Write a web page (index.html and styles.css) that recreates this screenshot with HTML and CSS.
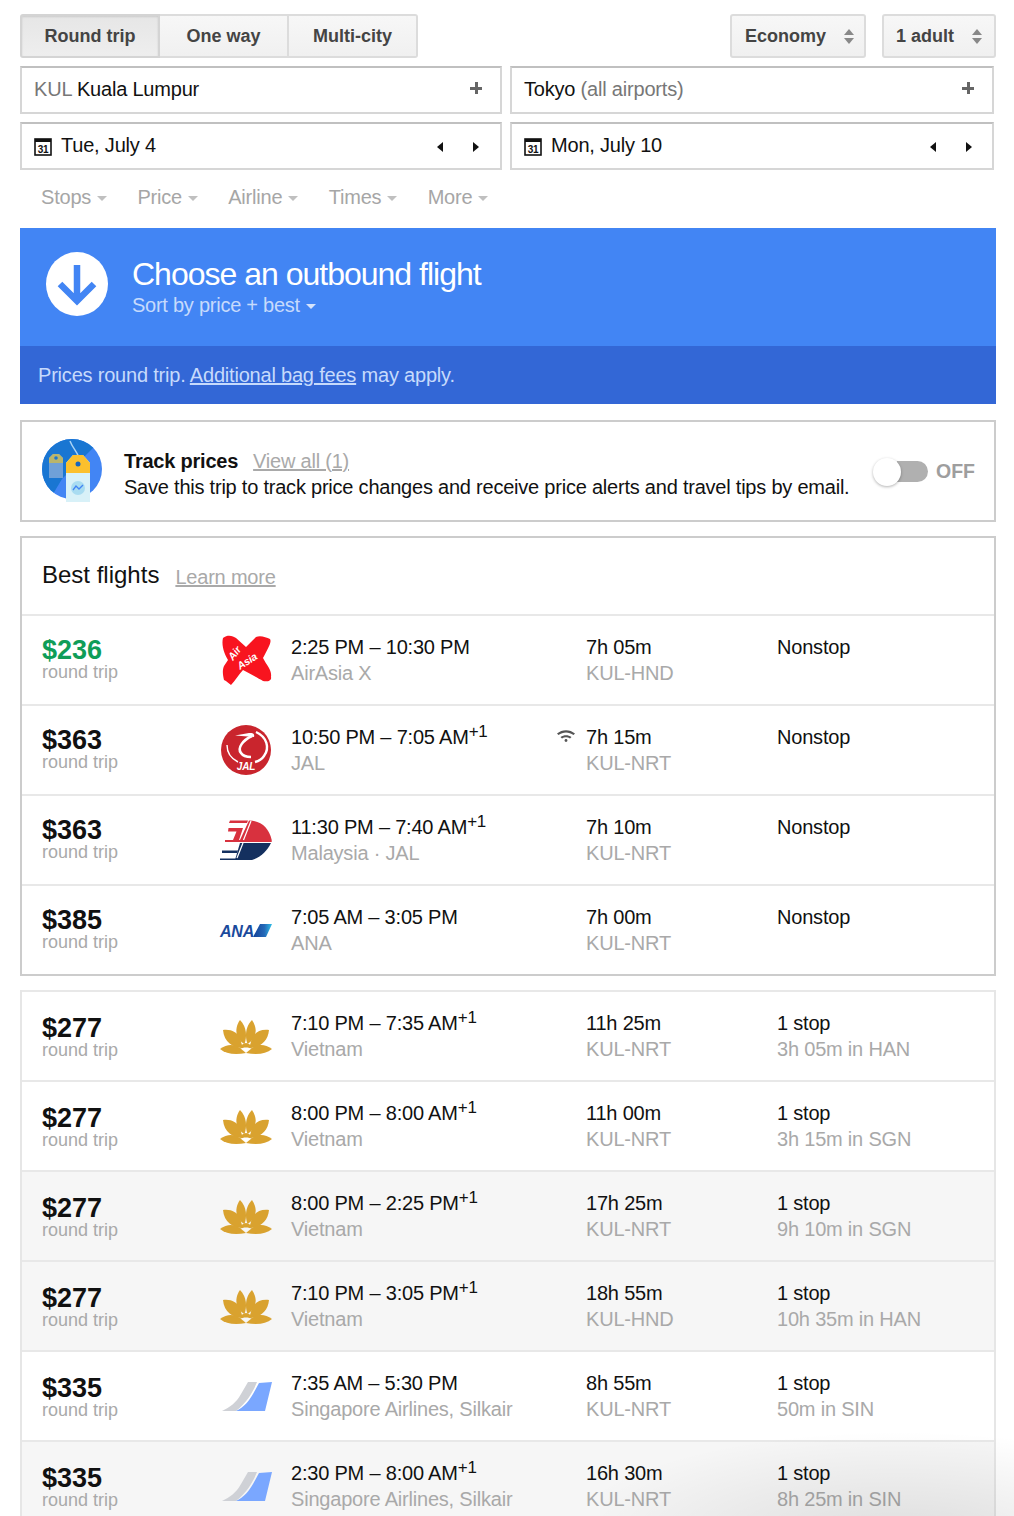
FILE: index.html
```html
<!DOCTYPE html>
<html lang="en">
<head>
<meta charset="utf-8">
<title>Flights</title>
<link rel="stylesheet" href="styles.css">
</head>
<body>
<svg class="defs" width="0" height="0" aria-hidden="true">
  <defs>
    <symbol id="cal" viewBox="0 0 18 18">
      <rect x="1" y="1" width="16" height="16" fill="#fff" stroke="#111" stroke-width="1.6"/>
      <rect x="1" y="1" width="16" height="3" fill="#111"/>
      <text x="9" y="14.500" text-anchor="middle" font-family="Liberation Sans" font-size="10" font-weight="700" fill="#111">31</text>
    </symbol>
    <symbol id="lotus" viewBox="0 0 52 52">
      <g fill="#d9a22f">
        <path d="M20 10C27 17 27 27 24.500 34 17 30 13 20 20 10Z"/>
        <path d="M32 10C25 17 25 27 27.500 34 35 30 39 20 32 10Z"/>
        <path d="M3 20C11 19 17 22 20 28 21 32 22 35 23 38 13 38 4 32 3 20Z"/>
        <path d="M49 20C41 19 35 22 32 28 31 32 30 35 29 38 39 38 48 32 49 20Z"/>
        <path d="M0 39C7 34 14 34 20 38L26 43C15 45 6 44 0 39Z"/>
        <path d="M52 39C45 34 38 34 32 38L26 43C37 45 46 44 52 39Z"/>
        <path d="M20 39C21 35 23 33 26 33 29 33 31 35 32 39 29 37 23 37 20 39Z"/>
      </g>
    </symbol>
    <symbol id="tail" viewBox="0 0 52 52">
      <path d="M2 41C10 37 16 33 21 24L28 12H37C33 22 27 32 16 41Z" fill="#cfd1d6"/>
      <path d="M16 41C24 37 29 31 33 24L39 13 52 12 45 41Z" fill="#7aa7ff"/>
    </symbol>
  </defs>
</svg>

<main class="page">
  <div class="toolbar">
    <div class="segments">
      <button class="seg seg-first seg-on">Round trip</button>
      <button class="seg seg-second">One way</button>
      <button class="seg seg-third">Multi-city</button>
    </div>
    <div class="selects">
      <div class="select select-cabin">Economy<span class="updown"><i class="up"></i><i class="down"></i></span></div>
      <div class="select select-people">1 adult<span class="updown"><i class="up"></i><i class="down"></i></span></div>
    </div>
  </div>

  <div class="fields">
    <div class="field"><span><span class="muted-code">KUL</span> Kuala Lumpur</span><span class="plus"></span></div>
    <div class="field field-right"><span>Tokyo <span class="muted-code">(all airports)</span></span><span class="plus"></span></div>
    <div class="field field-date"><span class="date"><svg class="cal"><use href="#cal"/></svg>Tue, July 4</span><span class="stepper"><i class="left"></i><i class="right"></i></span></div>
    <div class="field field-date field-right"><span class="date"><svg class="cal"><use href="#cal"/></svg>Mon, July 10</span><span class="stepper"><i class="left"></i><i class="right"></i></span></div>
  </div>

  <nav class="filters">
    <span class="filter">Stops<i class="caret"></i></span>
    <span class="filter">Price<i class="caret"></i></span>
    <span class="filter">Airline<i class="caret"></i></span>
    <span class="filter">Times<i class="caret"></i></span>
    <span class="filter">More<i class="caret"></i></span>
  </nav>

  <section class="banner">
    <div class="banner-top">
      <svg class="banner-icon" viewBox="0 0 62 64"><ellipse cx="31" cy="32" rx="31" ry="32" fill="#fff"/><path d="M31 13V49M14 32L31 49 48 32" fill="none" stroke="#4285f4" stroke-width="6.500"/></svg>
      <div>
        <h1 class="banner-title">Choose an outbound flight</h1>
        <div class="banner-sort">Sort by price + best<i class="caret caret-light"></i></div>
      </div>
    </div>
    <div class="banner-note">Prices round trip. <a class="note-link">Additional bag fees</a> may apply.</div>
  </section>

  <section class="track">
    <svg class="track-icon" viewBox="0 0 62 64">
      <defs><clipPath id="disc"><circle cx="30" cy="30" r="30"/></clipPath></defs>
      <g clip-path="url(#disc)">
        <rect width="62" height="64" fill="#4285f4"/>
        <path d="M0 0H62L52 8 20 40 8 60H0Z" fill="#1976d2"/>
        <path d="M28 2C31 10 35 12 37 19" fill="none" stroke="#a9d3f5" stroke-width="1.500"/>
      </g>
      <path d="M7 19L11 15H17L21 19V39H7Z" fill="#6fa0d8"/>
      <path d="M7 19L11 15H17L21 19V24H7Z" fill="#b9b56c"/>
      <circle cx="14" cy="19" r="1.800" fill="#1976d2"/>
      <path d="M24 24L31 16H41L48 24V63H24Z" fill="#d8f1f8"/>
      <path d="M24 24L31 16H41L48 24V34H24Z" fill="#fbc02d"/>
      <circle cx="36" cy="25" r="2.500" fill="#1565c0"/>
      <circle cx="36" cy="49" r="7" fill="#a9dcf1"/>
      <path d="M31 51L34 47 37 50 41 46" fill="none" stroke="#4285f4" stroke-width="1.300"/>
    </svg>
    <div class="track-text">
      <div><b class="track-name">Track prices</b><a class="grey-link track-link">View all (1)</a></div>
      <div>Save this trip to track price changes and receive price alerts and travel tips by email.</div>
    </div>
    <div class="toggle"><span class="toggle-rail"><span class="toggle-knob"></span></span><b class="toggle-label">OFF</b></div>
  </section>

  <section class="box box-best">
    <header class="box-head"><h2 class="box-title">Best flights</h2><a class="grey-link head-link">Learn more</a></header>

    <article class="row">
      <div class="price"><b class="amount amount-low">$236</b><span class="sub">round trip</span></div>
      <svg class="logo" viewBox="0 0 52 52">
        <path d="M3 4C8 0 13 2 16 4L26 13 36 3C40 1 46 3 50 5 52 8 48 14 43 24 47 32 52 36 51 43 52 47 47 48 43 47 38 44 30 40 23 36 19 40 15 47 11 51 8 49 7 47 4 46 3 41 2 37 4 32L8 26C5 21 1 12 3 4Z" fill="#f8141f"/>
        <text class="logo-script" transform="rotate(-52 13 27)" x="13" y="27">Air</text>
        <text class="logo-script" transform="rotate(-33 20 36)" x="20" y="36">Asia</text>
      </svg>
      <div class="cell"><div>2:25 PM – 10:30 PM</div><div class="dim">AirAsia X</div></div>
      <div class="cell"><div>7h 05m</div><div class="dim">KUL-HND</div></div>
      <div class="cell"><div>Nonstop</div></div>
    </article>

    <article class="row">
      <div class="price"><b class="amount">$363</b><span class="sub">round trip</span></div>
      <svg class="logo" viewBox="0 0 52 52">
        <circle cx="26" cy="26" r="25" fill="#c9252d"/>
        <path d="M15 11.500L29 9C33 8.500 35 10 34 13 32 13 30 12.500 28 12.500Z" fill="#fff"/>
        <path d="M32 12C23 16 17 24 21 29 23 32 27 33 31 33" fill="none" stroke="#fff" stroke-width="2.600"/>
        <path d="M36 8C47 13 50 24 44 32 42 35 39 37 35 38" fill="none" stroke="#fff" stroke-width="2.400"/>
        <path d="M7 21C7 29 12 35 18 38" fill="none" stroke="#fff" stroke-width="1.400"/>
        <text class="logo-jal" x="26" y="46" text-anchor="middle">JAL</text>
      </svg>
      <div class="cell"><div>10:50 PM – 7:05 AM<sup class="plus-day">+1</sup></div><div class="dim">JAL</div></div>
      <div class="cell cell-wifi">
        <svg class="wifi" viewBox="0 0 18 13"><path d="M0 4.500C5 0 13 0 18 4.500L16.500 6C12 2.500 6 2.500 1.500 6ZM3.500 8C7 5.500 11 5.500 14.500 8L13 9.500C10.500 7.800 7.500 7.800 5 9.500Z" fill="#555"/><circle cx="9" cy="11.500" r="1.400" fill="#555"/></svg>
        <div>7h 15m</div><div class="dim">KUL-NRT</div>
      </div>
      <div class="cell"><div>Nonstop</div></div>
    </article>

    <article class="row">
      <div class="price"><b class="amount">$363</b><span class="sub">round trip</span></div>
      <svg class="logo" viewBox="0 0 52 52">
        <path d="M29 6.500C41 6.500 49 14 51.700 26H20Z" fill="#d8313e"/>
        <path d="M10 6.500H28L27 9H9Z" fill="#d8313e"/>
        <path d="M8.500 14H23L19 26H13L16.500 17.500H8Z" fill="#d8313e"/>
        <path d="M5 26H51.700V28H5Z" fill="#d8313e"/>
        <path d="M20 29H51C47 37 41 43 32 46H15Z" fill="#14305f"/>
        <path d="M2 36.500H18L17 39H2Z" fill="#14305f"/>
        <path d="M0 44.500H30V46H0Z" fill="#14305f"/>
        <path d="M31 7L23.500 26M23 29L17 44" stroke="#fff" stroke-width="1.200" fill="none"/>
      </svg>
      <div class="cell"><div>11:30 PM – 7:40 AM<sup class="plus-day">+1</sup></div><div class="dim">Malaysia · JAL</div></div>
      <div class="cell"><div>7h 10m</div><div class="dim">KUL-NRT</div></div>
      <div class="cell"><div>Nonstop</div></div>
    </article>

    <article class="row">
      <div class="price"><b class="amount">$385</b><span class="sub">round trip</span></div>
      <svg class="logo" viewBox="0 0 52 52">
        <defs><linearGradient id="ana" x1="0" x2="1" y1="0" y2="0"><stop offset="0" stop-color="#123f96"/><stop offset=".6" stop-color="#2569b8"/><stop offset="1" stop-color="#2fc0e8"/></linearGradient></defs>
        <text class="logo-ana" x="0" y="33">ANA</text>
        <path d="M40 20H52L46 33H33Z" fill="url(#ana)"/>
      </svg>
      <div class="cell"><div>7:05 AM – 3:05 PM</div><div class="dim">ANA</div></div>
      <div class="cell"><div>7h 00m</div><div class="dim">KUL-NRT</div></div>
      <div class="cell"><div>Nonstop</div></div>
    </article>
  </section>

  <section class="box box-other">
    <article class="row">
      <div class="price"><b class="amount">$277</b><span class="sub">round trip</span></div>
      <svg class="logo"><use href="#lotus"/></svg>
      <div class="cell"><div>7:10 PM – 7:35 AM<sup class="plus-day">+1</sup></div><div class="dim">Vietnam</div></div>
      <div class="cell"><div>11h 25m</div><div class="dim">KUL-NRT</div></div>
      <div class="cell"><div>1 stop</div><div class="dim">3h 05m in HAN</div></div>
    </article>
    <article class="row">
      <div class="price"><b class="amount">$277</b><span class="sub">round trip</span></div>
      <svg class="logo"><use href="#lotus"/></svg>
      <div class="cell"><div>8:00 PM – 8:00 AM<sup class="plus-day">+1</sup></div><div class="dim">Vietnam</div></div>
      <div class="cell"><div>11h 00m</div><div class="dim">KUL-NRT</div></div>
      <div class="cell"><div>1 stop</div><div class="dim">3h 15m in SGN</div></div>
    </article>
    <article class="row row-alt">
      <div class="price"><b class="amount">$277</b><span class="sub">round trip</span></div>
      <svg class="logo"><use href="#lotus"/></svg>
      <div class="cell"><div>8:00 PM – 2:25 PM<sup class="plus-day">+1</sup></div><div class="dim">Vietnam</div></div>
      <div class="cell"><div>17h 25m</div><div class="dim">KUL-NRT</div></div>
      <div class="cell"><div>1 stop</div><div class="dim">9h 10m in SGN</div></div>
    </article>
    <article class="row row-alt">
      <div class="price"><b class="amount">$277</b><span class="sub">round trip</span></div>
      <svg class="logo"><use href="#lotus"/></svg>
      <div class="cell"><div>7:10 PM – 3:05 PM<sup class="plus-day">+1</sup></div><div class="dim">Vietnam</div></div>
      <div class="cell"><div>18h 55m</div><div class="dim">KUL-HND</div></div>
      <div class="cell"><div>1 stop</div><div class="dim">10h 35m in HAN</div></div>
    </article>
    <article class="row">
      <div class="price"><b class="amount">$335</b><span class="sub">round trip</span></div>
      <svg class="logo"><use href="#tail"/></svg>
      <div class="cell"><div>7:35 AM – 5:30 PM</div><div class="dim">Singapore Airlines, Silkair</div></div>
      <div class="cell"><div>8h 55m</div><div class="dim">KUL-NRT</div></div>
      <div class="cell"><div>1 stop</div><div class="dim">50m in SIN</div></div>
    </article>
    <article class="row row-alt">
      <div class="price"><b class="amount">$335</b><span class="sub">round trip</span></div>
      <svg class="logo"><use href="#tail"/></svg>
      <div class="cell"><div>2:30 PM – 8:00 AM<sup class="plus-day">+1</sup></div><div class="dim">Singapore Airlines, Silkair</div></div>
      <div class="cell"><div>16h 30m</div><div class="dim">KUL-NRT</div></div>
      <div class="cell"><div>1 stop</div><div class="dim">8h 25m in SIN</div></div>
    </article>
  </section>
</main>
<div class="corner-shade"></div>
</body>
</html>
```

FILE: styles.css
```css
* { box-sizing: border-box; }
html, body { margin: 0; padding: 0; }
body {
  position: relative;
  height: 1516px;
  overflow: hidden;
  background: #fff;
  color: #111;
  font-family: "Liberation Sans", Arial, sans-serif;
  font-size: 20px;
  line-height: 26px;
  letter-spacing: -0.2px;
}
.defs { position: absolute; }
h1, h2 { margin: 0; font-weight: 400; }
i { display: block; }

.page { width: 976px; margin-left: 20px; padding-top: 14px; }

/* toolbar */
.toolbar { display: flex; justify-content: space-between; height: 44px; }
.segments, .selects { display: flex; }
.selects { gap: 16px; }
.seg, .select {
  height: 44px;
  border: 2px solid #dcdcdc;
  background: linear-gradient(#f7f7f7, #f0f0f0);
  color: #444;
  font: 700 18px/40px "Liberation Sans", Arial, sans-serif;
  letter-spacing: 0;
  padding: 0;
}
.seg-first { width: 140px; border-radius: 3px 0 0 3px; }
.seg-second { width: 129px; border-left: 0; }
.seg-third { width: 129px; border-left: 0; border-radius: 0 3px 3px 0; }
.seg-on {
  background: linear-gradient(#e6e6e6, #eeeeee);
  box-shadow: inset 0 1px 2px rgba(0, 0, 0, .12);
  border-color: #d4d4d4;
}
.select {
  display: flex;
  align-items: center;
  justify-content: space-between;
  border-radius: 3px;
  padding: 0 10px 0 13px;
}
.select-cabin { width: 136px; }
.select-people { width: 114px; padding: 0 12px; }
.updown { display: flex; flex-direction: column; gap: 3px; }
.up { border: 5px solid transparent; border-top: 0; border-bottom: 6px solid #888; }
.down { border: 5px solid transparent; border-bottom: 0; border-top: 6px solid #888; }

/* fields */
.fields {
  display: grid;
  grid-template-columns: 482px 484px;
  gap: 8px;
  margin-top: 8px;
}
.field {
  height: 48px;
  display: flex;
  align-items: center;
  justify-content: space-between;
  border: 2px solid #d6d6d6;
  border-top-color: #c0c0c0;
  padding: 0 18px 2px 12px;
}
.field-date { padding-right: 21px; }
.field-date.field-right { padding-right: 20px; }
.muted-code { color: #777; }
.plus {
  width: 12px;
  height: 12px;
  margin-top: -2px;
  background:
    linear-gradient(#666, #666) center / 12px 3px no-repeat,
    linear-gradient(#666, #666) center / 3px 12px no-repeat;
}
.date { display: flex; align-items: center; gap: 9px; }
.cal { width: 18px; height: 18px; margin-top: 3px; }
.stepper { display: flex; gap: 30px; margin-top: 3px; }
.left { border: 5px solid transparent; border-left: 0; border-right: 6.500px solid #111; }
.right { border: 5px solid transparent; border-right: 0; border-left: 6.500px solid #111; }

/* filters */
.filters {
  display: flex;
  align-items: center;
  gap: 30.25px;
  height: 58px;
  padding: 0 0 4px 21px;
  color: #a6a6a6;
}
.filter { display: flex; align-items: center; }
.caret {
  margin: 2px 0 0 6px;
  border: 5px solid transparent;
  border-bottom: 0;
  border-top: 5px solid #c0c0c0;
}
.caret-light { border-top-color: #d5e3fb; }

/* banner */
.banner { height: 176px; background: #4285f4; }
.banner-top { display: flex; align-items: flex-start; height: 118px; padding: 24px 0 0 26px; gap: 24px; }
.banner-icon { width: 62px; height: 64px; flex: none; }
.banner-title { color: #fff; font-size: 32px; line-height: 44px; letter-spacing: -1px; }
.banner-sort { display: flex; align-items: center; color: #c6dafc; line-height: 22px; margin-top: -2px; letter-spacing: -0.25px; }
.banner-note { height: 58px; background: #3367d6; color: #c6dafc; padding: 0 18px; line-height: 58px; }
.note-link { text-decoration: underline; }

/* track prices */
.track {
  display: flex;
  align-items: center;
  height: 102px;
  margin-top: 16px;
  border: 2px solid #ccc;
  padding-left: 20px;
}
.track-icon { width: 62px; height: 64px; flex: none; margin-right: 20px; }
.track-text { line-height: 26px; flex: 1; padding-top: 6px; letter-spacing: -0.22px; }
.track-name { margin-right: 15px; }
.grey-link { color: #a9a9a9; text-decoration: underline; }
.toggle { display: flex; align-items: center; margin-right: 19px; }
.toggle-rail {
  position: relative;
  display: block;
  width: 31px;
  height: 21px;
  background: #b0b0b0;
  border-radius: 0 11px 11px 0;
}
.toggle-knob {
  position: absolute;
  left: -24px;
  top: -3px;
  width: 28px;
  height: 28px;
  border-radius: 50%;
  background: #fff;
  box-shadow: 0 1px 3px rgba(0, 0, 0, .3);
}
.toggle-label { margin-left: 8px; color: #9e9e9e; letter-spacing: 0; font-size: 19.500px; }

/* results */
.box { border: 2px solid #ccc; }
.box-best { margin-top: 14px; }
.box-other { margin-top: 14px; border-width: 0 2px; border-color: #e6e6e6; }
.box-head {
  display: flex;
  align-items: flex-start;
  gap: 16px;
  height: 76px;
  padding: 22px 0 0 20px;
}
.box-title { font-size: 24px; line-height: 30px; color: #111; letter-spacing: 0; }
.head-link { margin-top: 4px; }
.row {
  display: grid;
  grid-template-columns: 178px 71px 295px 191px 1fr;
  align-items: center;
  height: 90px;
  border-top: 2px solid #e8e8e8;
  padding-left: 20px;
}
.row-alt { background: #f6f6f6; }
.price { display: flex; flex-direction: column; padding-bottom: 2px; }
.box-other .price { padding: 2px 0 0; }
.amount { font-size: 27px; line-height: 26px; color: #111; letter-spacing: 0; }
.amount-low { color: #0f9d58; }
.sub { font-size: 18px; line-height: 18px; color: #a9a9a9; letter-spacing: 0; }
.logo { width: 52px; height: 52px; overflow: visible; }
.logo-script { font: italic 700 10.500px "Liberation Sans", sans-serif; fill: #fff; }
.logo-jal { font: italic 700 10px "Liberation Sans", sans-serif; fill: #fff; }
.logo-ana { font: italic 700 16px "Liberation Sans", sans-serif; fill: #1a4a9c; }
.cell { align-self: start; padding-top: 18px; line-height: 26px; position: relative; }
.dim { color: #a9a9a9; }
.plus-day { font-size: 17px; line-height: 0; vertical-align: 7px; }
.wifi { position: absolute; left: -29px; top: 23px; width: 18px; height: 13px; }

.corner-shade {
  position: absolute;
  left: 600px;
  top: 1350px;
  width: 414px;
  height: 166px;
  pointer-events: none;
  background: radial-gradient(ellipse 340px 110px at 72% 115%, rgba(0, 0, 0, .1), rgba(0, 0, 0, 0));
}
```
